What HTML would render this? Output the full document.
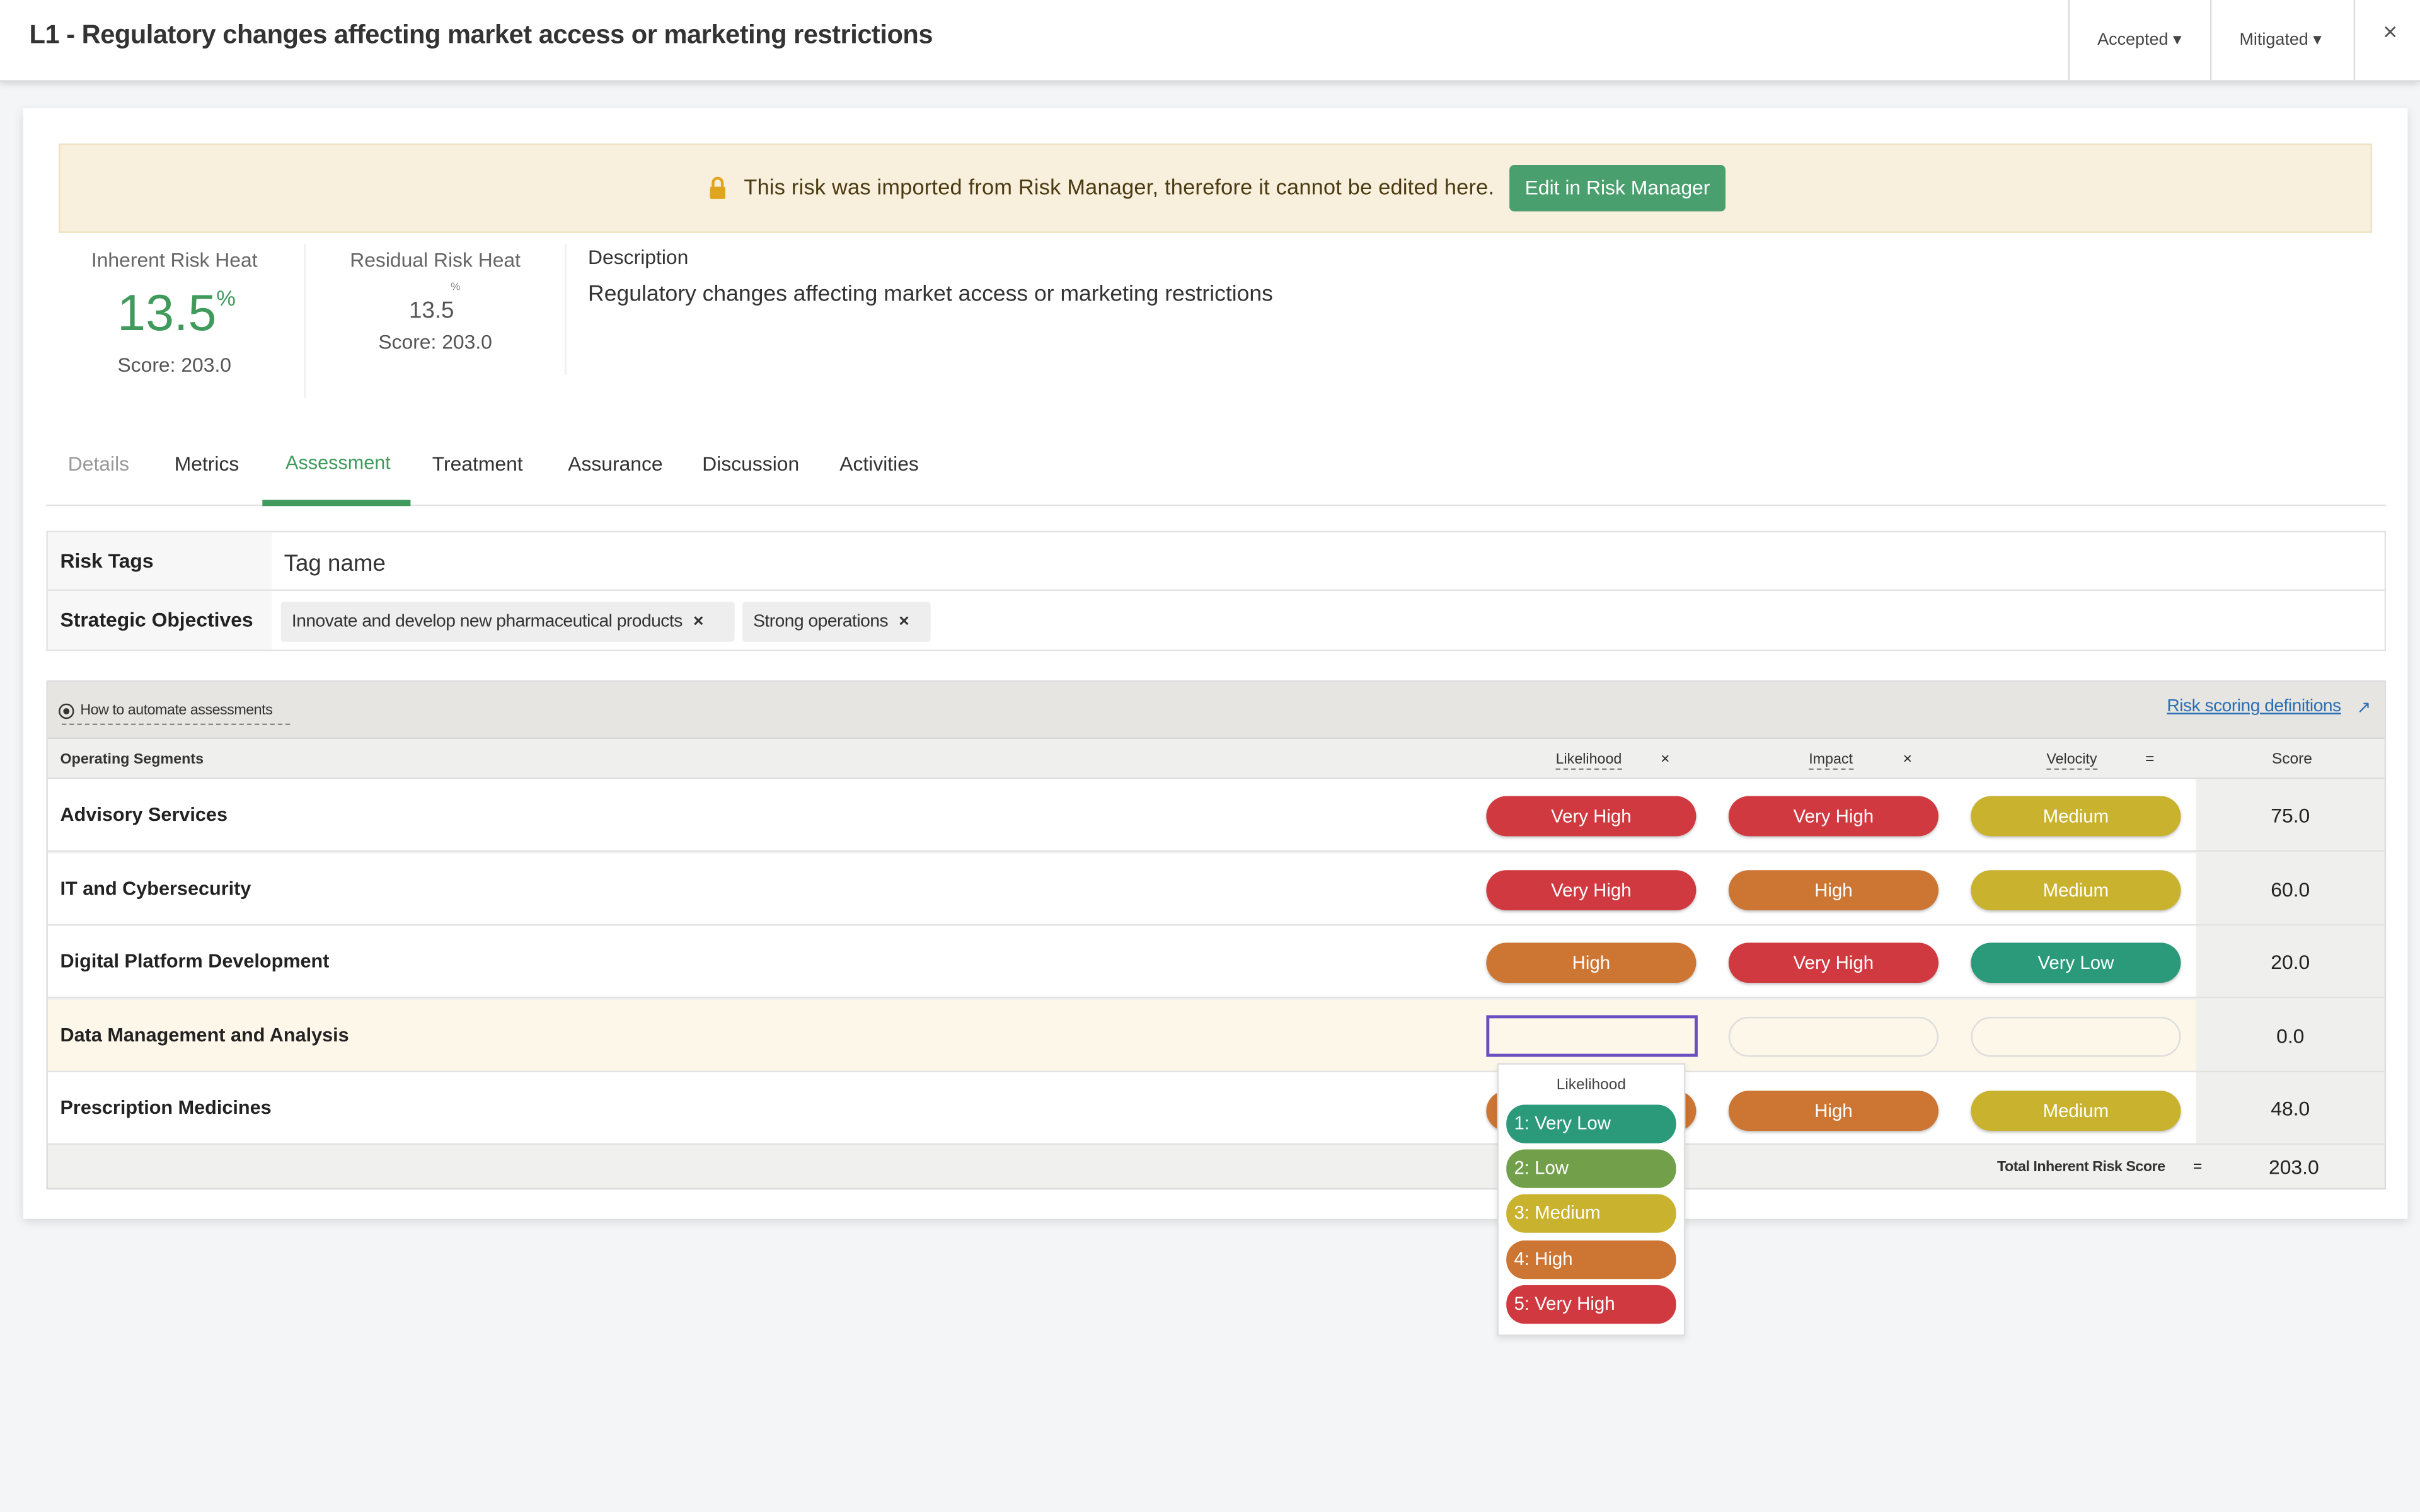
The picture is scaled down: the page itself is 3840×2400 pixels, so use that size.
<!DOCTYPE html>
<html><head><meta charset="utf-8"><style>
*{box-sizing:border-box;margin:0;padding:0}
html,body{width:3840px;height:2400px;overflow:hidden;background:#f4f5f7;font-family:"Liberation Sans",sans-serif;color:#222}
#s{position:absolute;left:0;top:0;width:1568px;height:980px;transform:scale(2.44898);transform-origin:0 0;background:#f4f5f7}
.a{position:absolute;white-space:nowrap}
.pill{position:absolute;width:136px;height:26px;border-radius:13px;color:#fff;font-size:12px;text-align:center;line-height:26px;box-shadow:0 1px 2px rgba(0,0,0,.25)}
.r{background:#d0393f}.o{background:#cd7533}.y{background:#c9b22d}.t{background:#2a9a7a}.g{background:#72a04a}
.row{position:absolute;left:31px;width:1392px;height:47px;border-bottom:1px solid #e2e2e2;background:#fff}
.row b{position:absolute;left:8px;top:16px;font-size:12.5px}
.sc{position:absolute;left:1423px;width:122px;height:47px;background:#efefed;text-align:center;line-height:47px;font-size:13px;border-bottom:1px solid #e2e2e2}
.dd{position:absolute;left:976px;width:110px;height:25px;border-radius:12px;color:#fff;font-size:12px;line-height:25px;padding-left:5px}
</style></head><body><div id="s">
<div class="a" style="left:0;top:0;width:1568px;height:53px;background:#fff;border-bottom:1px solid #d8d8d8;box-shadow:0 2px 4px rgba(0,0,0,.12)"></div>
<div class="a" style="left:19px;top:13px;font-size:17px;font-weight:bold;color:#333;letter-spacing:-0.2px">L1 - Regulatory changes affecting market access or marketing restrictions</div>
<div class="a" style="left:1340px;top:0;width:1px;height:53px;background:#ddd"></div>
<div class="a" style="left:1432px;top:0;width:1px;height:53px;background:#ddd"></div>
<div class="a" style="left:1525px;top:0;width:1px;height:53px;background:#ddd"></div>
<div class="a" style="left:1359px;top:19px;font-size:11px;color:#444">Accepted ▾</div>
<div class="a" style="left:1451px;top:19px;font-size:11px;color:#444">Mitigated ▾</div>
<div class="a" style="left:1544px;top:13px;font-size:16px;color:#555">×</div>

<div class="a" style="left:15px;top:70px;width:1545px;height:720px;background:#fff;box-shadow:0 2px 6px rgba(0,0,0,.12)"></div>
<div class="a" style="left:38px;top:93px;width:1499px;height:58px;background:#f8efdc;border:1px solid #efe2c4"></div>
<div class="a" style="left:459px;top:114px;width:12px;height:16px"><svg width="12" height="16"><path d="M3 7V4.5a3 3 0 0 1 6 0V7" fill="none" stroke="#e0a520" stroke-width="1.8"/><rect x="1" y="7" width="10" height="8" rx="1" fill="#e0a520"/></svg></div>
<div class="a" style="left:482px;top:113px;font-size:14px;color:#4a3a12;letter-spacing:0.1px">This risk was imported from Risk Manager, therefore it cannot be edited here.</div>
<div class="a" style="left:978px;top:107px;width:140px;height:30px;background:#4a9f6e;border-radius:3px;color:#fff;font-size:13px;text-align:center;line-height:30px">Edit in Risk Manager</div>

<div class="a" style="left:38px;top:161px;width:150px;text-align:center;font-size:13px;color:#666">Inherent Risk Heat</div>
<div class="a" style="left:76px;top:184px;font-size:33px;color:#3f9a5c">13.5<sup style="font-size:14px;position:relative;top:-4px">%</sup></div>
<div class="a" style="left:38px;top:229px;width:150px;text-align:center;font-size:13px;color:#555">Score: 203.0</div>
<div class="a" style="left:197px;top:158px;width:1px;height:100px;background:#eee"></div>
<div class="a" style="left:207px;top:161px;width:150px;text-align:center;font-size:13px;color:#666">Residual Risk Heat</div>
<div class="a" style="left:292px;top:183px;font-size:7px;color:#888">%</div>
<div class="a" style="left:265px;top:193px;font-size:15px;color:#555">13.5</div>
<div class="a" style="left:207px;top:214px;width:150px;text-align:center;font-size:13px;color:#555">Score: 203.0</div>
<div class="a" style="left:366px;top:158px;width:1px;height:85px;background:#eee"></div>
<div class="a" style="left:381px;top:159px;font-size:13px;color:#333">Description</div>
<div class="a" style="left:381px;top:183px;font-size:14.5px;color:#333">Regulatory changes affecting market access or marketing restrictions</div>

<div class="a" style="left:30px;top:327px;width:1516px;height:1px;background:#e3e3e3"></div>
<div class="a" style="left:44px;top:293px;font-size:13px;color:#999">Details</div>
<div class="a" style="left:113px;top:293px;font-size:13px;color:#333">Metrics</div>
<div class="a" style="left:185px;top:293px;font-size:12.5px;color:#3f9a5c">Assessment</div>
<div class="a" style="left:170px;top:324px;width:96px;height:4px;background:#3f9a5c"></div>
<div class="a" style="left:280px;top:293px;font-size:13px;color:#333">Treatment</div>
<div class="a" style="left:368px;top:293px;font-size:13px;color:#333">Assurance</div>
<div class="a" style="left:455px;top:293px;font-size:13px;color:#333">Discussion</div>
<div class="a" style="left:544px;top:293px;font-size:13px;color:#333">Activities</div>

<div class="a" style="left:30px;top:344px;width:1516px;height:78px;border:1px solid #e3e3e3;background:#fff"></div>
<div class="a" style="left:31px;top:345px;width:145px;height:76px;background:#f7f7f7"></div>
<div class="a" style="left:31px;top:382px;width:1514px;height:1px;background:#e3e3e3"></div>
<div class="a" style="left:39px;top:356px;font-size:13px;font-weight:bold">Risk Tags</div>
<div class="a" style="left:184px;top:357px;font-size:15px;color:#333">Tag name</div>
<div class="a" style="left:39px;top:394px;font-size:13px;font-weight:bold">Strategic Objectives</div>
<div class="a" style="left:182px;top:390px;width:294px;height:26px;background:#eee;border-radius:2px;font-size:11.5px;line-height:26px;padding-left:7px;color:#333;letter-spacing:-0.2px">Innovate and develop new pharmaceutical products <b style="margin-left:4px">×</b></div>
<div class="a" style="left:481px;top:390px;width:122px;height:26px;background:#eee;border-radius:2px;font-size:11.5px;line-height:26px;padding-left:7px;color:#333;letter-spacing:-0.2px">Strong operations <b style="margin-left:4px">×</b></div>

<div class="a" style="left:30px;top:441px;width:1516px;height:330px;border:1px solid #ddd;background:#f0f0ee"></div>
<div class="a" style="left:31px;top:442px;width:1514px;height:37px;background:#e6e5e2;border-bottom:1px solid #d8d8d8"></div>
<div class="a" style="left:38px;top:456px;width:10px;height:10px;border:1.5px solid #333;border-radius:50%"></div>
<div class="a" style="left:41px;top:459px;width:4px;height:4px;background:#333;border-radius:50%"></div>
<div class="a" style="left:52px;top:455px;font-size:9.5px;color:#333;letter-spacing:-0.2px">How to automate assessments</div>
<div class="a" style="left:40px;top:469px;width:148px;border-bottom:1px dashed #888"></div>
<div class="a" style="left:1404px;top:452px;font-size:11.5px;color:#2a6fb5;text-decoration:underline;letter-spacing:-0.2px">Risk scoring definitions</div>
<div class="a" style="left:1527px;top:452px;font-size:11px;color:#2a6fb5">↗</div>
<div class="a" style="left:31px;top:480px;width:1514px;height:25px;background:#efefed;border-bottom:1px solid #ddd"></div>
<div class="a" style="left:39px;top:487px;font-size:9.5px;font-weight:bold;color:#333">Operating Segments</div>
<div class="a" style="left:1008px;top:487px;font-size:9.5px;color:#333;border-bottom:1px dashed #888">Likelihood</div>
<div class="a" style="left:1076px;top:487px;font-size:10px">×</div>
<div class="a" style="left:1172px;top:487px;font-size:9.5px;color:#333;border-bottom:1px dashed #888">Impact</div>
<div class="a" style="left:1233px;top:487px;font-size:10px">×</div>
<div class="a" style="left:1326px;top:487px;font-size:9.5px;color:#333;border-bottom:1px dashed #888">Velocity</div>
<div class="a" style="left:1390px;top:487px;font-size:10px">=</div>
<div class="a" style="left:1472px;top:487px;font-size:10px;color:#333">Score</div>

<div class="row" style="top:505px"><b>Advisory Services</b></div><div class="sc" style="top:505px">75.0</div>
<div class="pill r" style="left:963px;top:516px">Very High</div><div class="pill r" style="left:1120px;top:516px">Very High</div><div class="pill y" style="left:1277px;top:516px">Medium</div>
<div class="row" style="top:553px"><b>IT and Cybersecurity</b></div><div class="sc" style="top:553px">60.0</div>
<div class="pill r" style="left:963px;top:564px">Very High</div><div class="pill o" style="left:1120px;top:564px">High</div><div class="pill y" style="left:1277px;top:564px">Medium</div>
<div class="row" style="top:600px"><b>Digital Platform Development</b></div><div class="sc" style="top:600px">20.0</div>
<div class="pill o" style="left:963px;top:611px">High</div><div class="pill r" style="left:1120px;top:611px">Very High</div><div class="pill t" style="left:1277px;top:611px">Very Low</div>
<div class="row" style="top:648px;background:#fdf7ea"><b>Data Management and Analysis</b></div><div class="sc" style="top:648px">0.0</div>
<div class="a" style="left:963px;top:658px;width:137px;height:27px;border:2px solid #6a4fc0;background:#fdf7ea"></div>
<div class="pill" style="left:1120px;top:659px;background:#fdf7ea;border:1px solid #ddd;box-shadow:none"></div>
<div class="pill" style="left:1277px;top:659px;background:#fdf7ea;border:1px solid #ddd;box-shadow:none"></div>
<div class="row" style="top:695px"><b>Prescription Medicines</b></div><div class="sc" style="top:695px">48.0</div>
<div class="pill o" style="left:963px;top:707px"></div><div class="pill o" style="left:1120px;top:707px">High</div><div class="pill y" style="left:1277px;top:707px">Medium</div>
<div class="a" style="left:1294px;top:751px;font-size:9.5px;font-weight:bold;color:#333;letter-spacing:-0.2px">Total Inherent Risk Score</div>
<div class="a" style="left:1421px;top:751px;font-size:10px">=</div>
<div class="a" style="left:1470px;top:749px;font-size:13px">203.0</div>

<div class="a" style="left:970px;top:689px;width:122px;height:177px;background:#fff;border:1px solid #ddd;box-shadow:0 2px 4px rgba(0,0,0,.1)"></div>
<div class="a" style="left:970px;top:698px;width:122px;text-align:center;font-size:10px;color:#444">Likelihood</div>
<div class="dd t" style="top:716px">1: Very Low</div>
<div class="dd g" style="top:745px">2: Low</div>
<div class="dd y" style="top:774px">3: Medium</div>
<div class="dd o" style="top:804px">4: High</div>
<div class="dd r" style="top:833px">5: Very High</div>
</div></body></html>
